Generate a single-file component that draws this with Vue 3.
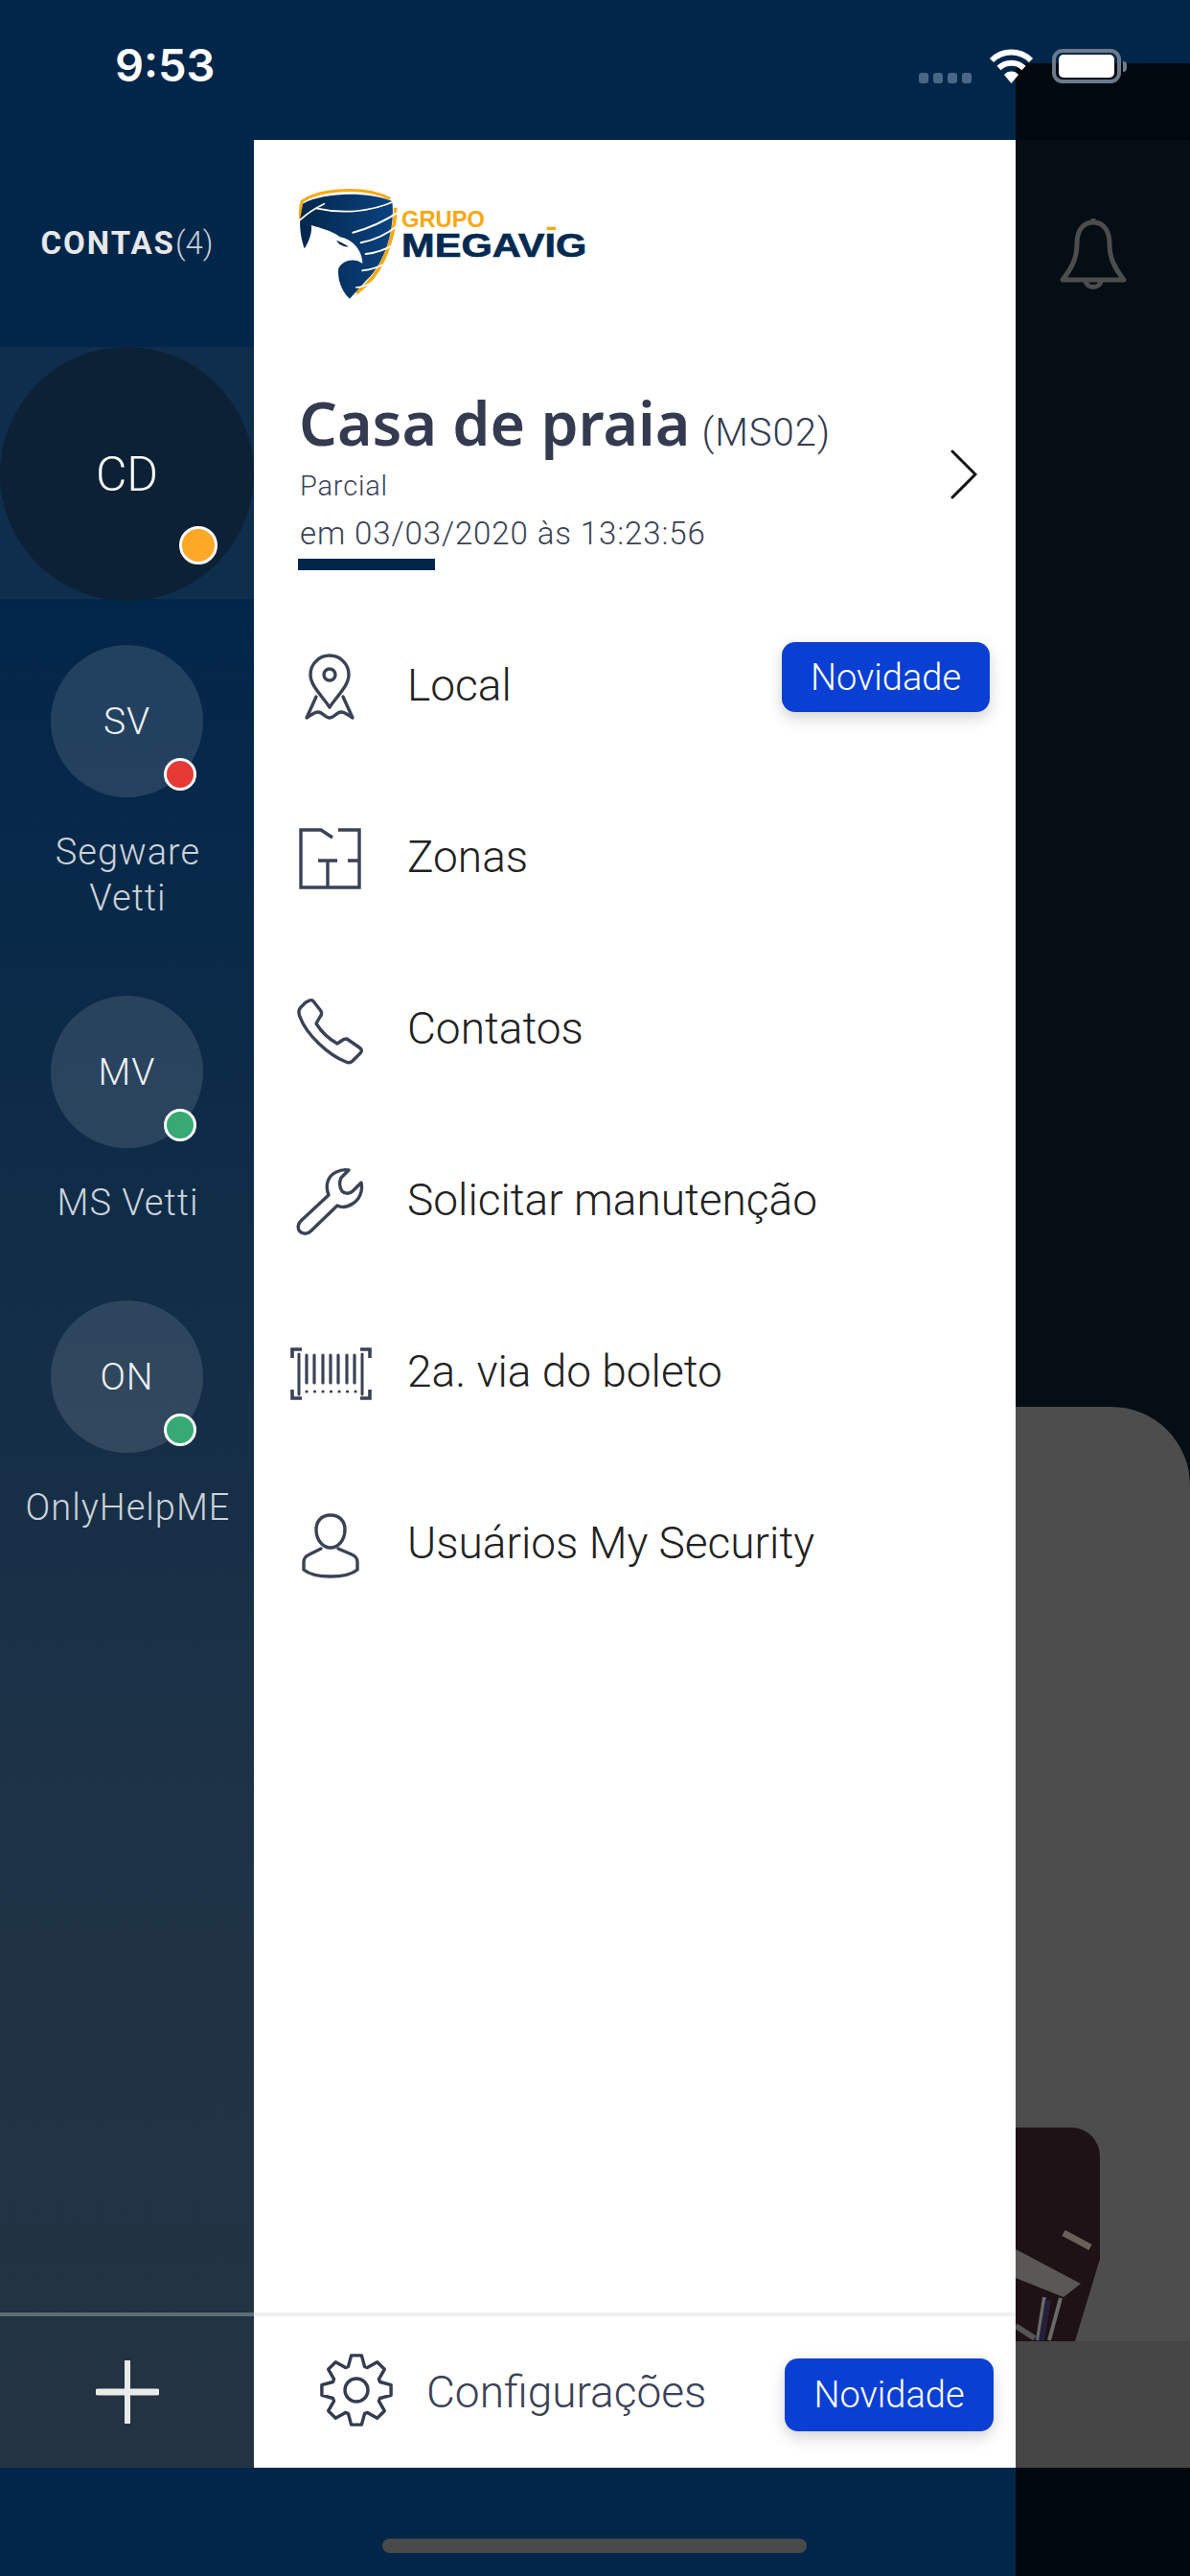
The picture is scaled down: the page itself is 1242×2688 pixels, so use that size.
<script setup>
const accounts = [
  { id: 'SV', lines: ['Segware', 'Vetti'], status: 'red' },
  { id: 'MV', lines: ['MS Vetti'], status: 'green' },
  { id: 'ON', lines: ['OnlyHelpME'], status: 'green' },
]
const menu = [
  { key: 'pin', label: 'Local', badge: true },
  { key: 'plan', label: 'Zonas' },
  { key: 'phone', label: 'Contatos' },
  { key: 'wrench', label: 'Solicitar manutenção' },
  { key: 'barcode', label: '2a. via do boleto' },
  { key: 'user', label: 'Usuários My Security' },
]
const codeBars = [21, 29, 38, 46, 54, 63, 71]

function gearPath() {
  const c = 38
  const pts = []
  for (let i = 0; i < 8; i++) {
    const a = (i * 45 - 90) * Math.PI / 180
    const p = (r, d) => {
      const t = a + d * Math.PI / 180
      return `${(c + r * Math.cos(t)).toFixed(1)} ${(c + r * Math.sin(t)).toFixed(1)}`
    }
    pts.push(p(26, -19), p(36.5, -8.5), p(36.5, 8.5), p(26, 19))
  }
  return 'M' + pts.join(' L') + ' Z'
}
const gear = gearPath()
</script>

<template>
  <div class="screen">
    <div class="left">
      <div class="top-spacer"></div>
      <div class="middle">
        <aside class="rail">
          <div class="rail-head"><b>CONTAS</b><span>(4)</span></div>
          <div class="selected">
            <div class="big-circle">CD<i class="dot big orange"></i></div>
          </div>
          <div class="accounts">
            <div v-for="a in accounts" :key="a.id" class="account">
              <div class="circle">{{ a.id }}<i class="dot" :class="a.status"></i></div>
              <div class="account-name"><div v-for="l in a.lines" :key="l">{{ l }}</div></div>
            </div>
          </div>
          <div class="rail-foot">
            <svg width="66" height="66" viewBox="0 0 66 66"><path d="M33 1v64" stroke="#e8eaec" stroke-width="6" stroke-linecap="round"/><path d="M2 33h62" stroke="#e8eaec" stroke-width="7" stroke-linecap="round"/></svg>
          </div>
        </aside>
        <main class="panel">
          <svg class="logo" width="400" height="170" viewBox="0 0 1200 510">
            <defs><linearGradient id="sh" x1="0" x2="1"><stop offset="0" stop-color="#02274c"/><stop offset="1" stop-color="#0b4280"/></linearGradient></defs>
            <path d="M131 205 C129 185 131 165 136 150 C190 112 330 100 412 142" fill="none" stroke="#f8a90f" stroke-width="9"/>
            <path d="M428 170 C428 245 398 350 340 408 L306 438" fill="none" stroke="#f8a90f" stroke-width="11"/>
            <path d="M138 158 C200 122 340 118 418 150 C428 235 395 345 335 400 L285 455 C262 435 245 395 250 360 C262 335 300 325 325 345 C325 310 300 270 255 262 C225 240 195 235 165 225 C168 255 152 285 143 298 C130 260 128 225 130 205 Z" fill="url(#sh)"/>
            <g fill="none" stroke="#fff" stroke-linecap="round">
              <path d="M130 208 C155 185 180 170 205 158" stroke-width="5"/>
              <path d="M180 172 C260 190 350 185 430 148" stroke-width="5"/>
              <path d="M295 248 C345 235 390 215 436 185" stroke-width="6"/>
              <path d="M320 280 C360 272 400 255 436 225" stroke-width="6"/>
              <path d="M335 315 C370 312 405 298 436 278" stroke-width="6"/>
              <path d="M325 367 C355 365 380 355 412 338" stroke-width="6"/>
              <path d="M305 420 C325 420 340 412 360 402" stroke-width="5"/>
            </g>
            <path d="M243 272 C258 278 270 285 282 292 C268 294 252 288 243 272Z" fill="#02274c"/>
            <text x="447" y="232" textLength="261" lengthAdjust="spacingAndGlyphs" class="logo-a">GRUPO</text>
            <text x="447" y="325" textLength="580" lengthAdjust="spacingAndGlyphs" class="logo-b">MEGAVIG</text>
            <rect x="902" y="230" width="28" height="10" fill="#f8a90f"/>
          </svg>

          <section class="head">
            <div class="head-text">
              <h1>Casa de praia<small>(MS02)</small></h1>
              <div class="state">Parcial</div>
              <div class="when">em 03/03/2020 às 13:23:56</div>
              <div class="underline"></div>
            </div>
            <svg class="chev" width="28" height="52" viewBox="0 0 28 52"><path d="M2 2 L26 26 L2 50" fill="none" stroke="#111" stroke-width="3" stroke-linecap="round"/></svg>
          </section>

          <nav class="menu">
            <div v-for="m in menu" :key="m.key" class="row">
              <svg class="ico" width="90" height="90" viewBox="0 0 90 90" fill="none" stroke="#3a4256" stroke-width="3.4" stroke-linecap="round" stroke-linejoin="round">
                <template v-if="m.key === 'pin'">
                  <path d="M45 68 C38 57 25 46 25 34 A20 20 0 0 1 65 34 C65 46 52 57 45 68Z"/>
                  <circle cx="45" cy="34" r="6"/>
                  <path d="M31 57 L21 79 C26 76 29 73 33 73 C38 73 40 79 45 79 C50 79 52 73 57 73 C61 73 64 76 69 79 L59 57"/>
                </template>
                <template v-else-if="m.key === 'plan'">
                  <path stroke-linecap="butt" stroke-linejoin="miter" d="M48 25 L36 17 H15 V77 H76 V17 H54 M33 49 H53 M64 49 H76 M43 49 V77"/>
                </template>
                <template v-else-if="m.key === 'phone'">
                  <path d="M20 18 L24 16 C26 15 28 16 29 18 L36 27 C37 29 37 31 35 33 L31 40 C36 48 44 56 53 61 L59 57 C60 56 62 56 63 56 L76 65 C79 67 79 69 77 71 L69 79 C67 81 64 81 62 80 C44 73 21 52 14 33 C12 28 13 25 15 23 Z"/>
                </template>
                <template v-else-if="m.key === 'wrench'">
                  <path d="M15 67 L44 40 C40 30 43 20 52 16 C56 14 60 13 65 14 L57 22 C55 26 55 32 58 36 C61 39 66 39 69 36 L78 27 C80 36 76 45 69 49 C63 53 57 53 53 51 L25 78 C22 81 17 81 14 78 C11 75 12 70 15 67Z"/>
                </template>
                <template v-else-if="m.key === 'barcode'">
                  <path stroke-linecap="butt" stroke-linejoin="miter" stroke-width="3.6" d="M6 31 V22 H16 M87 31 V22 H77 M6 64 V73 H16 M87 64 V73 H77"/>
                  <path d="M13 27 V69 M79 27 V69" stroke-width="3"/>
                  <path v-for="x in codeBars" :key="x" :d="`M${x} 28 V57`" stroke-width="3.2"/>
                  <path d="M21 66 H72" stroke-width="3.2" stroke-dasharray="0.1 8.4"/>
                </template>
                <template v-else>
                  <path d="M46 16 C36 16 31 23 31 31 C31 42 38 50 46 50 C54 50 61 42 61 31 C61 23 56 16 46 16Z"/>
                  <path d="M36 51 L24 57 C19 59 18 62 18 65 V73 C24 78 35 80 46 80 C57 80 68 78 74 73 V65 C74 62 73 59 68 57 L54 51"/>
                </template>
              </svg>
              <span class="label">{{ m.label }}</span>
              <span v-if="m.badge" class="badge over">Novidade</span>
            </div>
          </nav>

          <footer class="foot">
            <svg class="gear" width="76" height="76" viewBox="0 0 76 76" fill="none" stroke="#333c50" stroke-width="3.4" stroke-linejoin="round">
              <path :d="gear"/>
              <circle cx="38" cy="38" r="12"/>
            </svg>
            <span class="foot-label">Configurações</span>
            <span class="badge">Novidade</span>
          </footer>
        </main>
      </div>
      <div class="home"><div class="home-bar"></div></div>
    </div>

    <div class="right">
      <div class="right-a"></div>
      <div class="right-b"></div>
      <div class="right-c">
        <svg class="bell" width="74" height="78" viewBox="0 0 74 78" fill="none" stroke="#4d4d4d" stroke-width="5" stroke-linejoin="round">
          <path d="M37 4 V8 M37 8 C24 8 20 20 20 30 C20 44 16 54 5 68 H69 C58 54 54 44 54 30 C54 20 50 8 37 8Z"/>
          <path d="M29 68 C29 78 45 78 45 68"/>
        </svg>
      </div>
      <div class="card">
        <div class="photo">
          <svg width="88" height="223" viewBox="0 0 88 223">
            <path d="M0 127 L68 163 L50 177 L0 157Z" fill="#5a5855"/>
            <path d="M30 177 L23 222" stroke="#6a6a6a" stroke-width="4"/>
            <path d="M47 178 L35 222" stroke="#6a6a6a" stroke-width="4"/>
            <path d="M34 180 L27 222" stroke="#241f3a" stroke-width="6"/>
            <path d="M0 207 L20 220" stroke="#555" stroke-width="6"/>
            <path d="M50 110 L78 125" stroke="#6b6055" stroke-width="7"/>
            <path d="M88 137 L62 223 H88Z" fill="#4d4d4d"/>
          </svg>
        </div>
      </div>
      <div class="right-d"></div>
      <div class="right-e"></div>
    </div>

    <div class="status">
      <span class="time">9:53</span>
      <div class="status-icons">
        <span class="sig"><i></i><i></i><i></i><i></i></span>
        <svg width="47" height="36" viewBox="0 0 47 36"><g fill="none" stroke="#fff" stroke-width="6"><path d="M3 12 A29 29 0 0 1 44 12"/><path d="M10.5 20 A18.5 18.5 0 0 1 36.5 20"/></g><path d="M16 27 A10 10 0 0 1 31 27 L23.5 36Z" fill="#fff"/></svg>
        <div class="batt"><div></div><i></i></div>
      </div>
    </div>
  </div>
</template>

<style>
html, body { margin: 0; background: #02264a; }
</style>

<style scoped>
.screen { position: relative; display: flex; width: 1242px; height: 2688px; overflow: hidden; font-family: Roboto, "Liberation Sans", sans-serif; }
.left { width: 1060px; display: flex; flex-direction: column; flex: none; }
.top-spacer { height: 146px; background: #02264a; }
.middle { height: 2429px; display: flex; }
.home { flex: 1; background: #02264a; padding: 74px 0 0 399px; box-sizing: border-box; }
.home-bar { width: 443px; height: 15px; border-radius: 8px; background: #4a4a4a; }

.rail { width: 265px; display: flex; flex-direction: column; color: #fff; background: linear-gradient(#02264a 0, #02264a 480px, #0d2b48 1000px, #1f3346 1800px, #233342 100%); }
.rail-head { height: 216px; display: flex; justify-content: center; align-items: center; box-sizing: border-box; font-size: 33px; color: #e6e8ea; padding-bottom: 2px; }
.rail-head b { font-weight: 700; letter-spacing: 2px; }
.rail-head span { font-weight: 300; color: #c9cfd6; }
.selected { height: 263px; background: #0f2d4d; }
.big-circle { position: relative; width: 265px; height: 265px; border-radius: 50%; background: #0d2136; display: flex; align-items: center; justify-content: center; font-size: 50px; font-weight: 300; }
.accounts { flex: 1; display: flex; flex-direction: column; gap: 78px; padding-top: 48px; align-items: center; }
.account { width: 265px; display: flex; flex-direction: column; align-items: center; }
.circle { position: relative; width: 159px; height: 159px; border-radius: 50%; background: rgba(255,255,255,.12); display: flex; align-items: center; justify-content: center; font-size: 39px; font-weight: 300; letter-spacing: 1px; color: #eef0f3; }
.account-name { margin-top: 33px; padding-left: 2px; font-size: 38px; line-height: 48px; font-weight: 300; letter-spacing: 1px; text-align: center; color: #ccd2d9; }
.dot { position: absolute; box-sizing: border-box; width: 34px; height: 34px; right: 7px; bottom: 7px; border-radius: 50%; border: 3px solid #fff; }
.dot.big { width: 40px; height: 40px; right: 38px; bottom: 38px; }
.orange { background: #fda827; }
.red { background: #e53935; }
.green { background: #36a974; }
.rail-foot { height: 162px; border-top: 4px solid #5f6c78; box-sizing: border-box; display: flex; justify-content: center; padding-top: 46px; }

.panel { width: 795px; background: #fff; display: flex; flex-direction: column; }
.logo { display: block; margin: 14px 0 0 5px; flex: none; }
.logo-a { font: 700 72px "Liberation Sans", sans-serif; fill: #f8a90f; }
.logo-b { font: 700 107px "Liberation Sans", sans-serif; fill: #032a50; stroke: #032a50; stroke-width: 2px; }
.head { height: 295px; display: flex; justify-content: space-between; padding: 73px 40px 0 46px; box-sizing: border-box; flex: none; }
.head-text { color: #3a4256; }
h1 { display: flex; align-items: baseline; height: 76px; margin: 0 0 0 1px; font: 600 62.6px/76px "Noto Sans", sans-serif; color: #343b50; white-space: nowrap; }
h1 small { margin-left: 12px; font-size: 40px; font-weight: 300; letter-spacing: 1px; font-family: Roboto, sans-serif; }
.state { font-size: 29px; font-weight: 300; letter-spacing: .8px; line-height: 36px; margin: 10px 0 0 2px; }
.when { font-size: 33px; font-weight: 300; letter-spacing: .9px; line-height: 40px; margin: 12px 0 0 2px; }
.underline { width: 143px; height: 12px; background: #02264a; margin-top: 6px; }
.chev { margin-top: 66px; }
.menu { flex: 1; display: flex; flex-direction: column; }
.row { position: relative; height: 179px; display: flex; align-items: center; padding-left: 34px; flex: none; }
.ico { flex: none; margin-right: 36px; }
.label { font-size: 46px; font-weight: 300; color: #222; }
.badge { display: flex; align-items: center; justify-content: center; width: 218px; height: 76px; border-radius: 14px; background: #0a3fd4; color: #fff; font-size: 38px; font-weight: 300; box-shadow: 0 6px 16px rgba(0,0,0,.18); }
.badge.over { position: absolute; right: 27px; top: 45px; width: 217px; height: 73px; }
.foot { height: 162px; border-top: 4px solid #f0f0f0; box-sizing: border-box; display: flex; align-items: center; padding: 0 23px 0 69px; flex: none; }
.gear { flex: none; margin-right: 35px; margin-top: -4px; }
.foot-label { flex: 1; font-size: 46px; font-weight: 300; color: #3a4256; margin-top: -1px; }
.foot .badge { margin-top: 6px; }

.right { flex: 1; display: flex; flex-direction: column; background: #050e15; }
.right-a { height: 66px; background: #02264a; flex: none; }
.right-b { height: 80px; background: #020a10; flex: none; }
.right-c { height: 1322px; background: #050e15; flex: none; }
.bell { display: block; margin: 78px 0 0 44px; }
.card { height: 975px; background: #4d4d4d; border-top-right-radius: 82px; display: flex; flex-direction: column; justify-content: flex-end; flex: none; }
.photo { width: 88px; height: 223px; background: #1e1216; border-top-right-radius: 30px; overflow: hidden; }
.photo svg { display: block; }
.right-d { height: 132px; background: #454545; flex: none; }
.right-e { flex: 1; background: #01080f; }

.status { position: absolute; top: 0; left: 0; width: 1242px; box-sizing: border-box; padding: 44px 72px 0 120px; display: flex; justify-content: space-between; }
.time { font: 600 47px/48px Inter, sans-serif; color: #fff; }
.status-icons { display: flex; align-items: flex-end; height: 40px; margin-top: 3px; }
.sig { display: flex; gap: 5px; margin-right: 18px; margin-bottom: 0; }
.sig i { width: 10px; height: 11px; border-radius: 3px; background: #4a6885; }
.batt { position: relative; width: 72px; height: 36px; box-sizing: border-box; margin-left: 19px; border: 4px solid #6b7b8b; border-radius: 11px; padding: 2px 3px; }
.batt div { width: 100%; height: 100%; background: #fff; border-radius: 5px; }
.batt i { position: absolute; left: 70px; top: 9px; width: 4px; height: 11px; border-radius: 0 4px 4px 0; background: #6b7b8b; }
</style>
